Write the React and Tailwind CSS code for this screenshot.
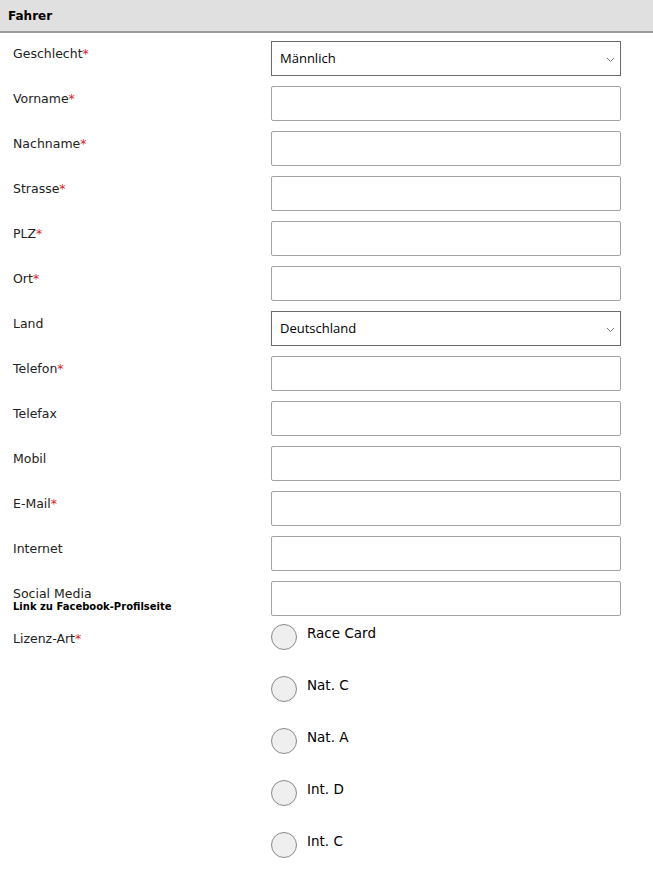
import React, { useState } from 'react';

const fields = [
  { label: 'Vorname', required: true },
  { label: 'Nachname', required: true },
  { label: 'Strasse', required: true },
  { label: 'PLZ', required: true },
  { label: 'Ort', required: true },
];

const fields2 = [
  { label: 'Telefon', required: true },
  { label: 'Telefax' },
  { label: 'Mobil' },
  { label: 'E-Mail', required: true },
  { label: 'Internet' },
];

const licences = ['Race Card', 'Nat. C', 'Nat. A', 'Int. D', 'Int. C'];

const Label = ({ text, required, sub }) => (
  <div className="w-[271px] shrink-0 pl-[13px] pt-[5px] text-[12.5px] leading-[15px] text-[#222]">
    {text}
    {required && <span className="text-[#e0202a]">*</span>}
    {sub && <div className="text-[10px] leading-[12px] font-bold text-black">{sub}</div>}
  </div>
);

const Select = ({ value }) => (
  <div className="relative w-[350px] h-[35px] border border-[#6b6b6b] bg-white flex items-center pl-[8px] text-[13px] text-black font-['Open_Sans',sans-serif]">
    {value}
    <svg className="absolute right-[5px] top-[15px]" width="9" height="6" viewBox="0 0 9 6">
      <path d="M1 1l3.5 3.5L8 1" fill="none" stroke="#777" strokeWidth="1" />
    </svg>
  </div>
);

const Input = () => (
  <input className="w-[350px] h-[35px] border border-[#a3a3a3] rounded-[2px] bg-white outline-none" />
);

const Row = ({ children, ...props }) => (
  <div className="flex mb-[10px]">
    <Label {...props} />
    {children}
  </div>
);

export default function App() {
  const [licence, setLicence] = useState(null);

  return (
    <div className="w-[653px] bg-white font-['DejaVu_Sans',Verdana,sans-serif]">
      <div className="h-[33px] bg-[#e0e0e0] border-b-2 border-[#9a9a9a] flex items-center pl-[8px]">
        <span className="text-[12px] font-bold text-black">Fahrer</span>
      </div>
      <div className="pt-[8px]">
        <Row text="Geschlecht" required>
          <Select value="Männlich" />
        </Row>
        {fields.map((f) => (
          <Row key={f.label} text={f.label} required={f.required}>
            <Input />
          </Row>
        ))}
        <Row text="Land">
          <Select value="Deutschland" />
        </Row>
        {fields2.map((f) => (
          <Row key={f.label} text={f.label} required={f.required}>
            <Input />
          </Row>
        ))}
        <Row text="Social Media" sub="Link zu Facebook-Profilseite">
          <Input />
        </Row>
        <div className="flex">
          <Label text="Lizenz-Art" required />
          <div className="-mt-[2px] flex flex-col gap-[26px]">
            {licences.map((l) => (
              <label key={l} className="flex items-start cursor-pointer" onClick={() => setLicence(l)}>
                <span className="w-[26px] h-[26px] rounded-full border border-[#8a8a8a] bg-[#efefef] flex items-center justify-center">
                  {licence === l && <span className="w-[12px] h-[12px] rounded-full bg-[#555]" />}
                </span>
                <span className="ml-[10px] pt-[1px] text-[13.5px] leading-[16px] text-black">{l}</span>
              </label>
            ))}
          </div>
        </div>
      </div>
    </div>
  );
}
